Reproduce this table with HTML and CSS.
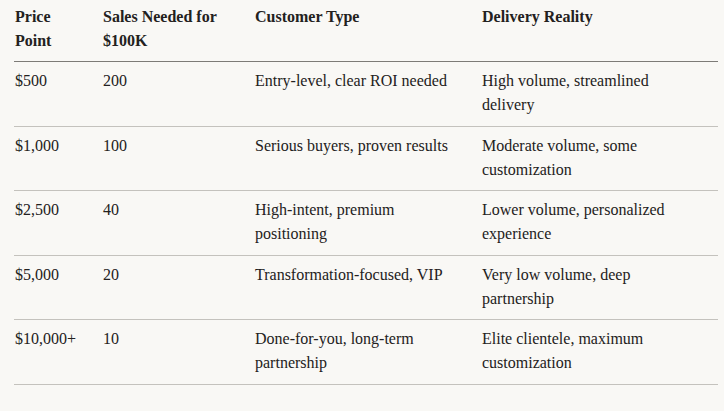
FILE: index.html
```html
<!DOCTYPE html>
<html lang="en">
<head>
<meta charset="utf-8">
<title>Price Points</title>
<link rel="stylesheet" href="styles.css">
</head>
<body>
<table class="pricing">
  <colgroup>
    <col class="c1"><col class="c2"><col class="c3"><col class="c4">
  </colgroup>
  <thead>
    <tr>
      <th>Price Point</th>
      <th>Sales Needed for $100K</th>
      <th>Customer Type</th>
      <th>Delivery Reality</th>
    </tr>
  </thead>
  <tbody>
    <tr>
      <td>$500</td>
      <td>200</td>
      <td>Entry-level, clear ROI needed</td>
      <td>High volume, streamlined delivery</td>
    </tr>
    <tr>
      <td>$1,000</td>
      <td>100</td>
      <td>Serious buyers, proven results</td>
      <td>Moderate volume, some customization</td>
    </tr>
    <tr>
      <td>$2,500</td>
      <td>40</td>
      <td>High-intent, premium positioning</td>
      <td>Lower volume, personalized experience</td>
    </tr>
    <tr>
      <td>$5,000</td>
      <td>20</td>
      <td>Transformation-focused, VIP</td>
      <td>Very low volume, deep partnership</td>
    </tr>
    <tr>
      <td>$10,000+</td>
      <td>10</td>
      <td>Done-for-you, long-term partnership</td>
      <td>Elite clientele, maximum customization</td>
    </tr>
  </tbody>
</table>
</body>
</html>
```

FILE: styles.css
```css
html, body {
  margin: 0;
  padding: 0;
  background: #f9f8f5;
}

body {
  font-family: "Liberation Serif", "Times New Roman", serif;
  font-size: 16px;
  line-height: 24px;
  color: #232120;
}

.pricing {
  margin-left: 14px;
  width: 704px;
  border-collapse: collapse;
  table-layout: fixed;
}

.pricing .c1 { width: 88px; }
.pricing .c2 { width: 152px; }
.pricing .c3 { width: 227px; }
.pricing .c4 { width: 237px; }

.pricing th {
  text-align: left;
  font-weight: bold;
  vertical-align: top;
  padding: 5px 19px 8px 1px;
  border-bottom: 1px solid #7d7b77;
}

.pricing td {
  vertical-align: top;
  padding: 7px 19px 8.6px 1px;
  border-bottom: 1px solid #c4c2bd;
}
```
